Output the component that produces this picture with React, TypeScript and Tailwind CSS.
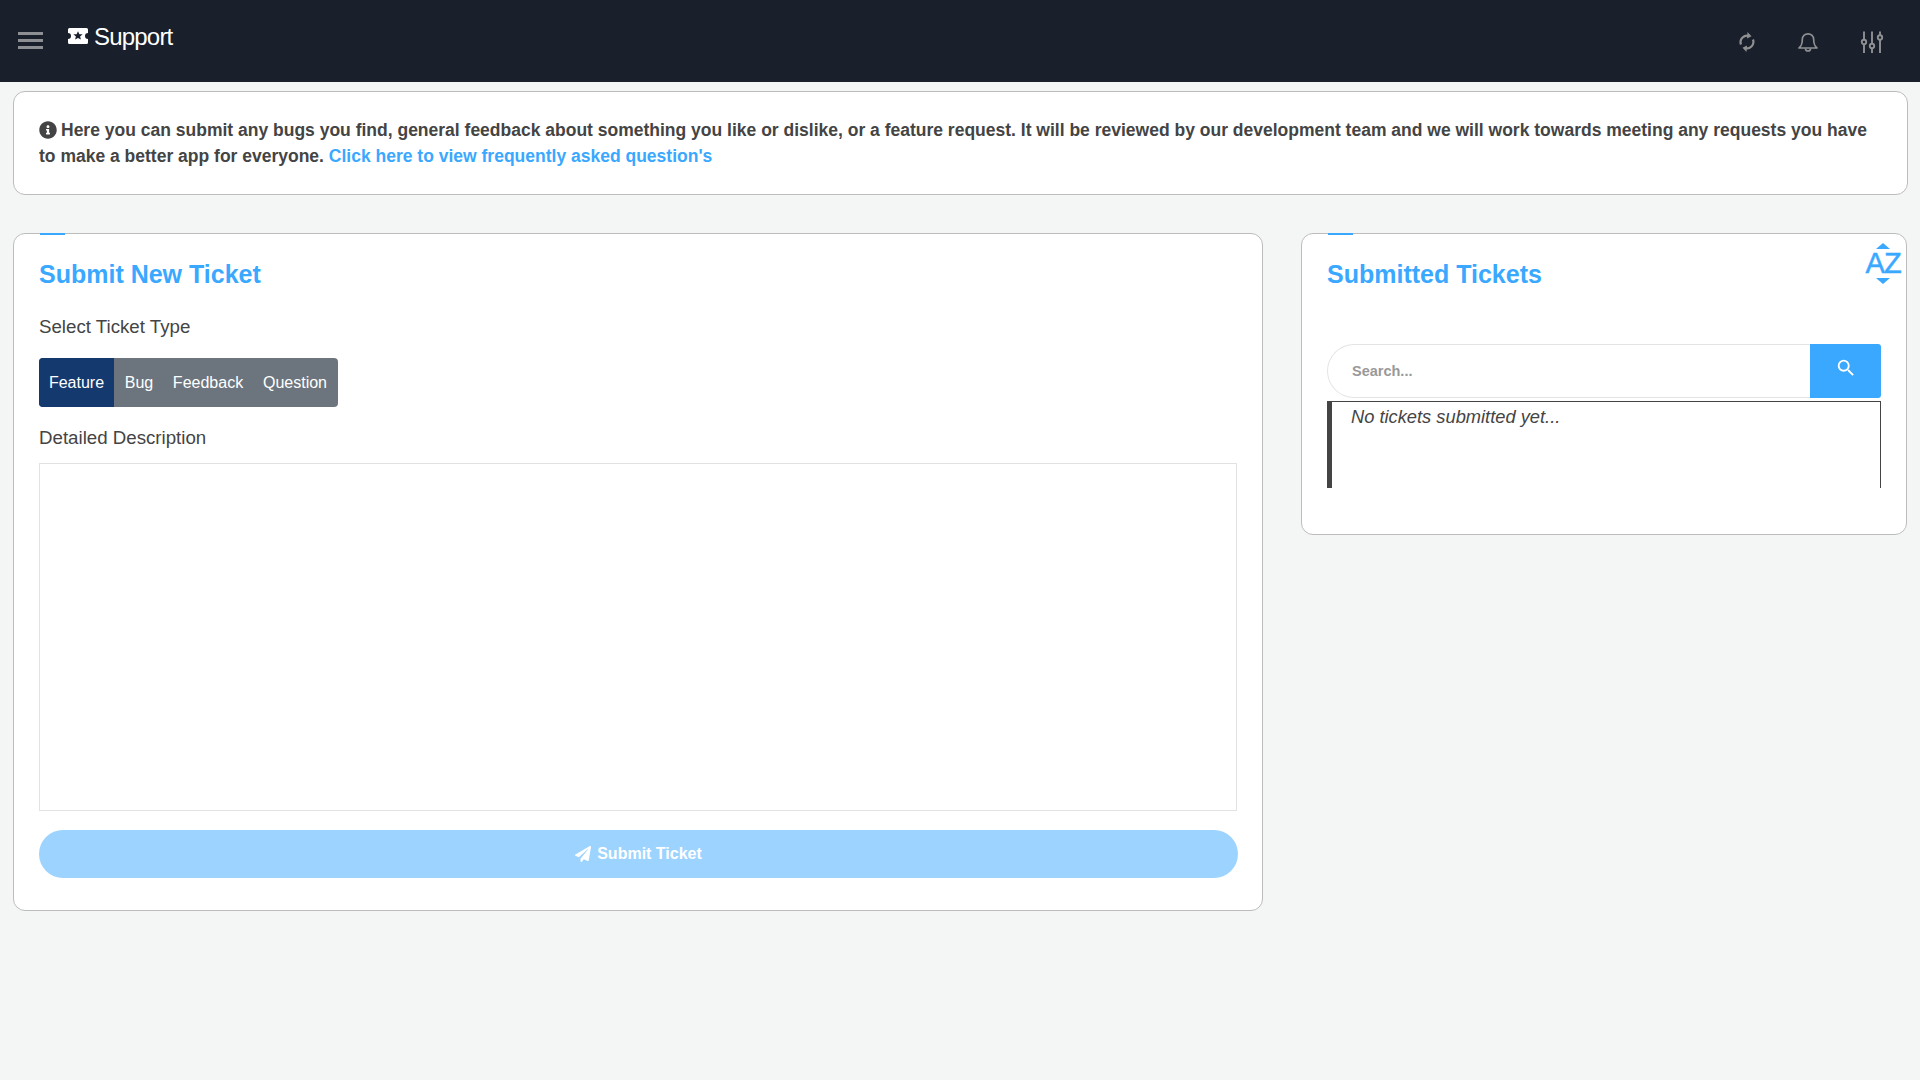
import React from "react";
import { FaInfoCircle, FaPaperPlane } from "react-icons/fa";
import { MdSearch } from "react-icons/md";

// Top navigation bar
function Header() {
  return (
    <header className="h-[82px] bg-[#19202c] flex items-start shrink-0">
      <div className="flex flex-col gap-[4px] ml-[18px] mt-[32px] w-[25px]">
        <span className="h-[3px] bg-[#8e8f92]" />
        <span className="h-[3px] bg-[#8e8f92]" />
        <span className="h-[3px] bg-[#8e8f92]" />
      </div>
      <div className="flex items-center ml-[25px] mt-[21px] h-[32px]">
        <svg width="20" height="16" viewBox="0 0 20 16" className="mr-[6px] -mt-[3px]">
          <path
            fillRule="evenodd"
            fill="#ffffff"
            d="M1.5 0h17A1.5 1.5 0 0 1 20 1.5V5a3 3 0 0 0 0 6v3.5a1.5 1.5 0 0 1-1.5 1.5h-17A1.5 1.5 0 0 1 0 14.500V11a3 3 0 0 0 0-6V1.500A1.500 1.500 0 0 1 1.500 0zM10 3.200l1.400 3h3.200l-2.500 2.200.8 3.200-2.900-1.700-2.900 1.700.8-3.200-2.500-2.200h3.200z"
          />
        </svg>
        <span className="text-[24px] leading-[32px] text-white tracking-[-0.8px]">Support</span>
      </div>
      <div className="ml-auto flex items-center text-[#8f9092] mt-[30px]">
        {/* Refresh */}
        <svg width="24" height="24" viewBox="0 0 24 24" fill="none" stroke="currentColor" strokeWidth="2.200">
          <path d="M6 14.500a6.500 6.500 0 0 1 8.500-8.300" />
          <path d="M18 9.500a6.500 6.500 0 0 1-8.500 8.300" />
          <path d="M12.500 2l4 4.300-4.500 2.200z" fill="currentColor" stroke="none" />
          <path d="M11.500 22l-4-4.300 4.500-2.200z" fill="currentColor" stroke="none" />
        </svg>
        {/* Bell */}
        <svg width="24" height="24" viewBox="0 0 24 24" fill="none" stroke="currentColor" strokeWidth="1.700" className="ml-[37px]">
          <path d="M3 18c2-2 3.300-3 3.300-8.500a5.700 5.700 0 0 1 11.400 0c0 5.500 1.300 6.500 3.300 8.500z" strokeLinejoin="round" />
          <path d="M9.500 18.500a2.500 2.500 0 0 0 5 0" />
        </svg>
        {/* Sliders */}
        <svg width="24" height="24" viewBox="0 0 24 24" fill="none" stroke="currentColor" strokeWidth="1.900" className="ml-[40px]">
          <path d="M4 1.500v8.500M4 14v9M12 1.500v12.500M12 18v5M20 5.500V1.500M20 9.500V23" />
          <circle cx="4" cy="12" r="2.200" />
          <circle cx="12" cy="16" r="2.200" />
          <circle cx="20" cy="7.500" r="2.200" />
        </svg>
        <span className="w-[36px]" />
      </div>
    </header>
  );
}

// Small accent tick on the top edge of a card
function CardTick() {
  return <span className="absolute -top-px left-[26px] w-[25px] h-[2px] bg-[#3aa8ff]" />;
}

function SubmitCard() {
  return (
    <section className="relative w-[1250px] h-[678px] shrink-0 bg-white border border-[#bcbcbc] rounded-[12px] pl-[25px] pr-[25px]">
      <CardTick />
      <h2 className="mt-[25px] text-[25px] leading-[30px] font-bold text-[#3aa8ff]">Submit New Ticket</h2>
      <p className="mt-[26px] text-[18.7px] leading-[24px] text-[#444444]">Select Ticket Type</p>
      <div className="mt-[19px] flex w-fit h-[49px] rounded-[4px] overflow-hidden bg-[#6c757d] text-white text-[16px]">
        <span className="w-[75px] flex items-center justify-center bg-[#14396f]">Feature</span>
        <span className="w-[50px] flex items-center justify-center">Bug</span>
        <span className="w-[88px] flex items-center justify-center">Feedback</span>
        <span className="w-[86px] flex items-center justify-center">Question</span>
      </div>
      <p className="mt-[19px] text-[18.7px] leading-[24px] text-[#444444]">Detailed Description</p>
      <div className="mt-[13px] w-[1198px] h-[348px] border border-[#e2e2e2]" />
      <button className="mt-[19px] w-[1199px] h-[48px] rounded-full bg-[#9dd3ff] text-white text-[16px] font-bold flex items-center justify-center gap-[6px]">
        <FaPaperPlane className="w-[16px] h-[16px]" />
        Submit Ticket
      </button>
    </section>
  );
}

function TicketsCard() {
  return (
    <section className="relative w-[606px] h-[302px] shrink-0 bg-white border border-[#bcbcbc] rounded-[12px] pl-[25px] pr-[25px]">
      <CardTick />
      <h2 className="mt-[25px] text-[25px] leading-[30px] font-bold text-[#3aa8ff]">Submitted Tickets</h2>
      {/* Sort toggle */}
      <div className="absolute top-[9px] right-[5px] flex flex-col items-center text-[#3aa8ff]">
        <span className="w-0 h-0 border-x-[7px] border-x-transparent border-b-[6px] border-b-[#3aa8ff]" />
        <span className="text-[29px] leading-[29px] tracking-[-0.8px] [-webkit-text-stroke:0.5px_#3aa8ff]">AZ</span>
        <span className="w-0 h-0 border-x-[7px] border-x-transparent border-t-[6px] border-t-[#3aa8ff]" />
      </div>
      <div className="mt-[55px] flex h-[54px] w-[554px]">
        <div className="flex-1 flex items-center pl-[24px] pt-[1px] border border-r-0 border-[#e4e4e4] rounded-l-full text-[14.500px] font-bold text-[#999999]">
          Search...
        </div>
        <div className="w-[71px] bg-[#3aa8ff] rounded-r-[3px] flex justify-center pt-[13px]">
          <MdSearch className="w-[22px] h-[22px] text-white" />
        </div>
      </div>
      <div className="mt-[3px] w-[554px] h-[87px] border-t border-r border-l-[5px] border-[#444444] pl-[19px] pt-[3px] text-[18.300px] leading-[24px] italic text-[#444444]">
        No tickets submitted yet...
      </div>
    </section>
  );
}

export default function App() {
  return (
    <div className="min-h-[1080px] bg-[#f4f6f6] font-['Liberation_Sans',Arial,sans-serif]">
      <Header />
      <main className="pl-[13px] pr-[12px] pt-[9px]">
        {/* Info banner */}
        <div className="h-[104px] bg-white border border-[#bcbcbc] rounded-[12px] pl-[25px] pr-[25px] pt-[25px] text-[17.500px] leading-[26px] font-bold text-[#444444]">
          <FaInfoCircle className="inline w-[18px] h-[18px] mr-[4px] -mt-[3px]" />
          Here you can submit any bugs you find, general feedback about something you like or dislike, or a feature request. It will be reviewed by our development team and we will work towards meeting any requests you have to make a better app for everyone.{" "}
          <span className="text-[#3aa8ff]">Click here to view frequently asked question's</span>
        </div>
        <div className="flex items-start gap-[38px] mt-[38px]">
          <SubmitCard />
          <TicketsCard />
        </div>
      </main>
    </div>
  );
}
